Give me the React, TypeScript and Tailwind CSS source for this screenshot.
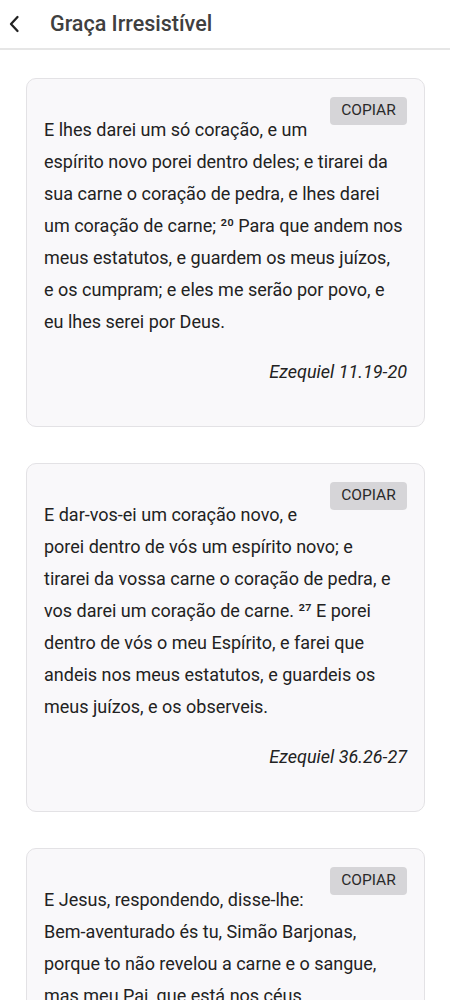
const verses = [
  {
    lines: [
      "E lhes darei um só coração, e um",
      "espírito novo porei dentro deles; e tirarei da",
      "sua carne o coração de pedra, e lhes darei",
      "um coração de carne; ²⁰ Para que andem nos",
      "meus estatutos, e guardem os meus juízos,",
      "e os cumpram; e eles me serão por povo, e",
      "eu lhes serei por Deus.",
    ],
    reference: "Ezequiel 11.19-20",
  },
  {
    lines: [
      "E dar-vos-ei um coração novo, e",
      "porei dentro de vós um espírito novo; e",
      "tirarei da vossa carne o coração de pedra, e",
      "vos darei um coração de carne. ²⁷ E porei",
      "dentro de vós o meu Espírito, e farei que",
      "andeis nos meus estatutos, e guardeis os",
      "meus juízos, e os observeis.",
    ],
    reference: "Ezequiel 36.26-27",
  },
  {
    lines: [
      "E Jesus, respondendo, disse-lhe:",
      "Bem-aventurado és tu, Simão Barjonas,",
      "porque to não revelou a carne e o sangue,",
      "mas meu Pai, que está nos céus.",
    ],
    reference: "Mateus 16.17",
  },
];

const App = () => {
  return (
    <div className="min-h-screen bg-white font-['Roboto',sans-serif] text-[#222]">
      <header className="h-[50px] flex items-center border-b-2 border-[#e6e6e6]">
        <button className="w-[20px] flex justify-end">
          <svg width="12" height="18" viewBox="0 0 12 18" fill="none">
            <path d="M9.5 2 L3 9 L9.5 16" stroke="#222" strokeWidth="2.3" strokeLinecap="round" strokeLinejoin="round" />
          </svg>
        </button>
        <h1 className="ml-[30px] text-[21.5px] font-medium text-[#404040]">Graça Irresistível</h1>
      </header>

      <main className="pl-[26px] pr-[25px] pt-[28px] flex flex-col gap-[36px]">
        {verses.map((verse, idx) => (
          <div
            key={idx}
            className="rounded-[10px] border border-[#e3e2e5] bg-[#f9f8fa] px-[17px] pt-[18px] pb-[40px]"
          >
            <button className="float-right h-[28px] w-[77px] rounded-[4px] bg-[#d6d5d8] text-[15.5px] text-[#2a2a2a]">
              COPIAR
            </button>
            <p className="pt-[17px] text-[18px] leading-[32px] whitespace-pre-line">
              {verse.lines.join("\n")}
            </p>
            <p className="mt-[20px] text-right text-[18px] italic leading-[28px]">
              {verse.reference}
            </p>
          </div>
        ))}
      </main>
    </div>
  );
};

export default App;
